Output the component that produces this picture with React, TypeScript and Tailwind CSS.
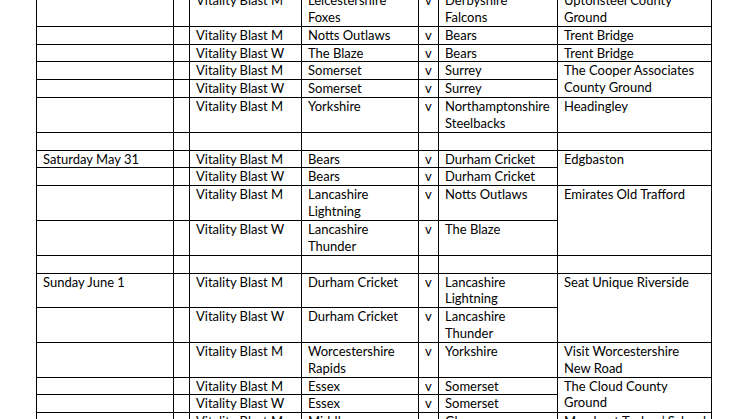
import React from 'react';

type Row = {
  date?: string;
  comp?: string;
  home?: React.ReactNode;
  v?: boolean;
  away?: React.ReactNode;
  venue?: React.ReactNode;
  span?: number;
  noVenue?: boolean;
};

const rows: Row[] = [
  { comp: 'Vitality Blast M', home: <>Leicestershire<br />Foxes</>, v: true, away: <>Derbyshire<br />Falcons</>, venue: <>Uptonsteel County<br />Ground</> },
  { comp: 'Vitality Blast M', home: 'Notts Outlaws', v: true, away: 'Bears', venue: 'Trent Bridge' },
  { comp: 'Vitality Blast W', home: 'The Blaze', v: true, away: 'Bears', venue: 'Trent Bridge' },
  { comp: 'Vitality Blast M', home: 'Somerset', v: true, away: 'Surrey', venue: <>The Cooper Associates<br />County Ground</>, span: 2 },
  { comp: 'Vitality Blast W', home: 'Somerset', v: true, away: 'Surrey', noVenue: true },
  { comp: 'Vitality Blast M', home: 'Yorkshire', v: true, away: <>Northamptonshire<br />Steelbacks</>, venue: 'Headingley' },
  { venue: '\u00a0' },
  { date: 'Saturday May 31', comp: 'Vitality Blast M', home: 'Bears', v: true, away: 'Durham Cricket', venue: 'Edgbaston', span: 2 },
  { comp: 'Vitality Blast W', home: 'Bears', v: true, away: 'Durham Cricket', noVenue: true },
  { comp: 'Vitality Blast M', home: <>Lancashire<br />Lightning</>, v: true, away: 'Notts Outlaws', venue: 'Emirates Old Trafford', span: 2 },
  { comp: 'Vitality Blast W', home: <>Lancashire<br />Thunder</>, v: true, away: <>The Blaze<br />{'\u00a0'}</>, noVenue: true },
  { venue: '\u00a0' },
  { date: 'Sunday June 1', comp: 'Vitality Blast M', home: <>Durham Cricket<br />{'\u00a0'}</>, v: true, away: <>Lancashire<br />Lightning</>, venue: 'Seat Unique Riverside', span: 2 },
  { comp: 'Vitality Blast W', home: 'Durham Cricket', v: true, away: <>Lancashire<br />Thunder</>, noVenue: true },
  { comp: 'Vitality Blast M', home: <>Worcestershire<br />Rapids</>, v: true, away: 'Yorkshire', venue: <>Visit Worcestershire<br />New Road</> },
  { comp: 'Vitality Blast M', home: 'Essex', v: true, away: 'Somerset', venue: <>The Cloud County<br />Ground</>, span: 2 },
  { comp: 'Vitality Blast W', home: 'Essex', v: true, away: 'Somerset', noVenue: true },
  { comp: 'Vitality Blast M', home: 'Middlesex', v: true, away: 'Glamorgan', venue: 'Merchant Taylors\u2019 School' },
];

const cell = 'border border-black align-top px-[6px] py-0 whitespace-nowrap';

export default function App() {
  return (
    <div className="w-[746px] h-[419px] overflow-hidden bg-white text-black">
      <table
        className="ml-[36px] mt-[-9px] table-fixed border-collapse text-[13px] leading-[16.85px]"
        style={{ fontFamily: 'Lato, "Liberation Sans", sans-serif', width: 675 }}
      >
        <colgroup>
          <col className="w-[137px]" />
          <col className="w-[16px]" />
          <col className="w-[112px]" />
          <col className="w-[117px]" />
          <col className="w-[20px]" />
          <col className="w-[119px]" />
          <col className="w-[154px]" />
        </colgroup>
        <tbody>
          {rows.map((r, i) => (
            <tr key={i}>
              <td className={cell}>{r.date ?? '\u00a0'}</td>
              <td className={cell}></td>
              <td className={cell}>{r.comp}</td>
              <td className={cell}>{r.home}</td>
              <td className={cell}>{r.v ? 'v' : ''}</td>
              <td className={cell}>{r.away}</td>
              {!r.noVenue && (
                <td className={cell} rowSpan={r.span ?? 1}>
                  {r.venue}
                </td>
              )}
            </tr>
          ))}
        </tbody>
      </table>
    </div>
  );
}
